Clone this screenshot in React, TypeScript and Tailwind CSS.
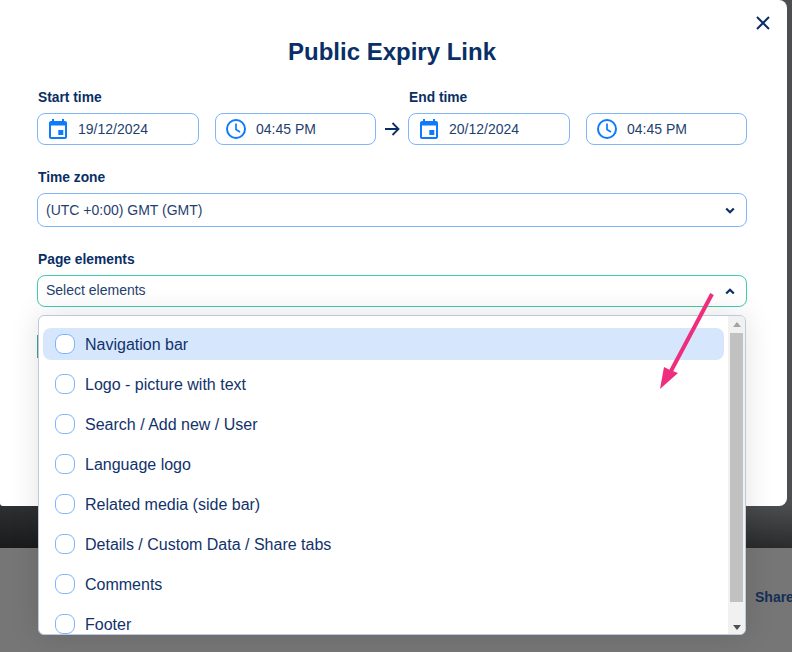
import React from "react";

const navy = "text-[#0a2f66]";
const label = `text-[13.8px] leading-[16px] font-bold ${navy} pl-[1px]`;

function CalendarIcon() {
  return (
    <svg width="24" height="24" viewBox="0 0 24 24" fill="#0d7bfb" className="shrink-0">
      <path d="M19 4h-1V2h-2v2H8V2H6v2H5c-1.100 0-2 .9-2 2v14c0 1.100.9 2 2 2h14c1.100 0 2-.9 2-2V6c0-1.100-.9-2-2-2zm0 16H5V8.500h14V20z" />
      <path d="M12.300 13h5v5h-5z" />
    </svg>
  );
}

function ClockIcon() {
  return (
    <svg width="24" height="24" viewBox="0 0 24 24" fill="none" stroke="#0d7bfb" className="shrink-0">
      <circle cx="12" cy="12" r="9" strokeWidth="2" />
      <path d="M12 6.500V12.500L16 15" strokeWidth="1.700" />
    </svg>
  );
}

function Chevron({ up }: { up?: boolean }) {
  return (
    <svg width="10" height="7" viewBox="0 0 10 7" fill="none" stroke="#0b2e63" strokeWidth="2.200" className="shrink-0">
      <path d={up ? "M1.200 5.500L5 1.800L8.800 5.500" : "M1.200 1.500L5 5.200L8.800 1.500"} />
    </svg>
  );
}

function Field({ icon, value, width }: { icon: React.ReactNode; value: string; width: string }) {
  return (
    <div className={`${width} h-8 flex items-center rounded-lg border border-[#7fb6fa] bg-white`}>
      <span className="ml-[8px] mr-[8px] flex">{icon}</span>
      <span className="text-[14px] text-[#1f3f6f]">{value}</span>
    </div>
  );
}

const items = [
  "Navigation bar",
  "Logo - picture with text",
  "Search / Add new / User",
  "Language logo",
  "Related media (side bar)",
  "Details / Custom Data / Share tabs",
  "Comments",
  "Footer",
];

export default function App() {
  return (
    <div
      className="relative w-[792px] h-[652px] overflow-hidden bg-[#767676]"
      style={{ fontFamily: '"Liberation Sans", Arial, sans-serif' }}
    >
      <div className="h-[548px] bg-[linear-gradient(to_bottom,transparent_92%,rgba(0,0,0,0.45)),linear-gradient(to_right,#2e3032,#4c4e50)]">
        <div className="relative w-[787px] h-[506px] bg-white rounded-bl-[3px] rounded-br-[8px] rounded-tr-[8px] pt-[38px] pl-[37px]">
          <svg width="14" height="14" viewBox="0 0 14 14" fill="none" stroke="#0b2e63" strokeWidth="2" className="absolute left-[756px] top-[16px]">
            <path d="M1 1L13 13M13 1L1 13" />
          </svg>
          <h1 className={`text-center text-[24px] leading-[28px] font-bold ${navy} w-[710px]`}>Public Expiry Link</h1>

          <div className="flex items-end w-[710px] mt-[24px]">
            <div>
              <div className={`${label} mb-[7px]`}>Start time</div>
              <div className="flex gap-[16px]">
                <Field width="w-[162px]" value="19/12/2024" icon={<CalendarIcon />} />
                <Field width="w-[161px]" value="04:45 PM" icon={<ClockIcon />} />
              </div>
            </div>
            <div className="w-[32px] h-8 flex items-center justify-center">
              <svg width="16" height="16" viewBox="0 0 16 16" fill="none" stroke="#0b2e63" strokeWidth="1.800">
                <path d="M1 8H14.500M8.500 2L14.500 8L8.500 14" />
              </svg>
            </div>
            <div>
              <div className={`${label} mb-[7px]`}>End time</div>
              <div className="flex gap-[16px]">
                <Field width="w-[162px]" value="20/12/2024" icon={<CalendarIcon />} />
                <Field width="w-[161px]" value="04:45 PM" icon={<ClockIcon />} />
              </div>
            </div>
          </div>

          <div className={`${label} mt-[25px] mb-[7px]`}>Time zone</div>
          <div className="w-[710px] h-[34px] flex items-center justify-between rounded-lg border border-[#7fb6fa] pl-[8px] pr-[11px]">
            <span className="text-[14px] text-[#1f3f6f]">(UTC +0:00) GMT (GMT)</span>
            <Chevron />
          </div>

          <div className={`${label} mt-[25px] mb-[7px]`}>Page elements</div>
          <div className="w-[710px] h-[32px] flex items-center justify-between rounded-lg border border-[#3ecfa8] pl-[8px] pr-[11px]">
            <span className="text-[14px] leading-[18px] mt-[-2px] text-[#1f3f6f]">Select elements</span>
            <Chevron up />
          </div>
          <div className="w-[1px] h-[23px] bg-[#4f9a90] absolute left-[37px] top-[335px]" />
        </div>
      </div>

      <span className="absolute left-[755px] top-[587px] text-[14px] font-bold text-[#142f55]">Share</span>

      <div className="absolute left-[38px] top-[315px] w-[708px] h-[320px] rounded-[6px] bg-white border border-[#bcc9de] overflow-hidden shadow-[0_0_30px_rgba(0,0,0,0.12)] flex">
        <div className="flex-1 pt-[12px] pl-[4px] pr-[4px] overflow-hidden">
          {items.map((t, i) => (
            <div key={t} className={`h-[32px] mb-[8px] flex items-center rounded-lg pl-[12px] ${i === 0 ? "bg-[#d6e7fd]" : ""}`}>
              <span className="w-[20px] h-[20px] rounded-[8px] border border-[#7fb6fa] bg-white mr-[10px] shrink-0" />
              <span className="text-[16px] leading-[20px] mt-[1px] text-[#12326b]">{t}</span>
            </div>
          ))}
        </div>
        <div className="w-[17px] bg-[#f1f1f1] flex flex-col items-center shrink-0">
          <div className="h-[17px] flex items-center justify-center">
            <svg width="8" height="5" viewBox="0 0 8 5" fill="#a3a3a3"><path d="M4 0L8 5H0z" /></svg>
          </div>
          <div className="w-[13px] h-[269px] bg-[#c1c1c1]" />
          <div className="flex-1 flex items-end pb-[4px]">
            <svg width="8" height="5" viewBox="0 0 8 5" fill="#505050"><path d="M0 0H8L4 5z" /></svg>
          </div>
        </div>
      </div>

      <svg width="60" height="100" viewBox="0 0 60 100" className="absolute left-[659px] top-[292px]">
        <path d="M53 2L12 79" stroke="#ee2d7c" strokeWidth="4" fill="none" />
        <path d="M1 97L5 75L11 78L19 81z" fill="#ee2d7c" />
      </svg>
    </div>
  );
}
